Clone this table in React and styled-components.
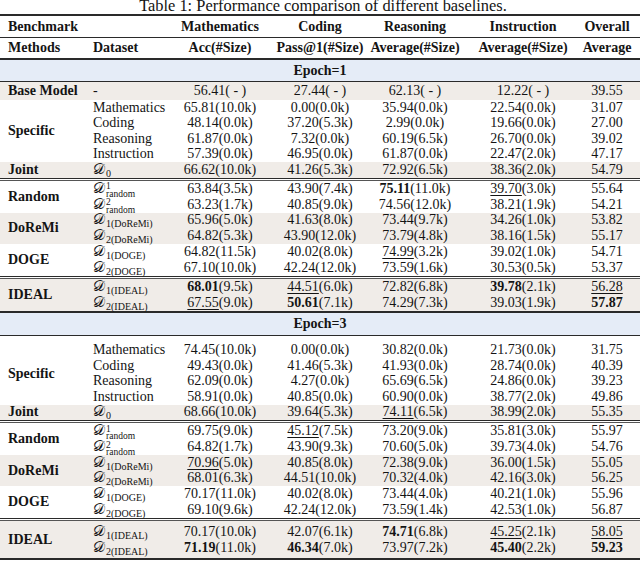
import React from 'react'
import styled, { createGlobalStyle } from 'styled-components'

const GlobalStyle = createGlobalStyle`
  body {
    margin: 0;
    background: #fff;
  }
`

const COLS = '88px 88px 88px 112px 78px 138px 48px'
const GREY = '#f0ece8'
const BLUE = '#e5ecf7'

const Page = styled.div`
  width: 640px;
  height: 563px;
  overflow: hidden;
  font-family: 'Liberation Serif', 'Times New Roman', serif;
  font-size: 14px;
  color: #141414;
`

const Caption = styled.div`
  height: 14px;
  line-height: 11px;
  font-size: 16.4px;
  text-align: center;
  padding-left: 6px;
  white-space: nowrap;
`

const Rule = styled.div`
  height: ${props => props.$w || 1}px;
  background: #2a2a2a;
`

const DoubleRule = styled.div`
  height: 3px;
  box-sizing: border-box;
  border-top: 1px solid #2a2a2a;
  border-bottom: 1px solid #555;
`

const Spacer = styled.div`
  height: ${props => props.$h}px;
`

const Band = styled.div`
  height: ${props => props.$h}px;
  line-height: ${props => props.$h}px;
  background: ${BLUE};
  text-align: center;
  font-weight: bold;
`

const Row = styled.div`
  display: grid;
  grid-template-columns: ${COLS};
  grid-template-rows: repeat(${props => props.$n || 1}, ${props => props.$h}px);
  align-content: center;
  align-items: center;
  height: ${props => props.$n * props.$h + (props.$extra || 0)}px;
  line-height: 16px;
  white-space: nowrap;
  background: ${props => props.$bg || 'transparent'};
`

const Method = styled.div`
  grid-column: 1;
  grid-row: 1 / -1;
  padding-left: 8px;
  font-weight: bold;
`

const HeadLeft = styled.div`
  padding-left: ${props => props.$pad}px;
  font-weight: bold;
  grid-column: ${props => props.$span || 'auto'};
`

const DataSet = styled.div`
  padding-left: 5px;
`

const Num = styled.div`
  display: flex;
  justify-content: center;
  padding-right: ${props => (props.$last ? 18 : 0)}px;
  font-weight: ${props => (props.$head ? 'bold' : 'normal')};
`

const Strong = styled.b`
  font-weight: bold;
`

const Under = styled.span`
  text-decoration: underline;
  text-decoration-thickness: 1px;
  text-underline-offset: 2px;
`

const Cal = styled.span`
  font-family: 'DejaVu Serif', 'DejaVu Sans', serif;
  font-size: 15px;
`

const Sub = styled.span`
  font-size: 10px;
  position: relative;
  top: 3px;
  margin-left: 1px;
`

const Stack = styled.span`
  display: inline-flex;
  flex-direction: column;
  vertical-align: middle;
  font-size: 9.5px;
  line-height: 7.5px;
  margin-left: 1px;
  position: relative;
  top: 1px;
`

const Value = ({ v, last }) => {
  const m = v.match(/^(\*|_)(.+?)\1(.*)$/)
  let body = <span>{v}</span>
  if (m) {
    const Mark = m[1] === '*' ? Strong : Under
    body = (
      <span>
        <Mark>{m[2]}</Mark>
        {m[3]}
      </span>
    )
  }
  return <Num $last={last}>{body}</Num>
}

const Symbol = ({ ds }) => {
  if (typeof ds === 'string') return <DataSet>{ds}</DataSet>
  return (
    <DataSet>
      <Cal>𝒟</Cal>
      {ds.sup ? (
        <Stack>
          <span>{ds.sup}</span>
          <span>{ds.sub}</span>
        </Stack>
      ) : (
        <Sub>{ds.sub}</Sub>
      )}
    </DataSet>
  )
}

const Group = ({ label, h, bg, rows, extra }) => (
  <Row $n={rows.length} $h={h} $bg={bg} $extra={extra}>
    <Method>{label}</Method>
    {rows.map((r, i) => (
      <React.Fragment key={i}>
        <Symbol ds={r[0]} />
        {r.slice(1).map((v, j) => (
          <Value key={j} v={v} last={j === 4} />
        ))}
      </React.Fragment>
    ))}
  </Row>
)

const specific = vals => ({
  label: 'Specific',
  h: 15.5,
  rows: [
    ['Mathematics', ...vals[0]],
    ['Coding', ...vals[1]],
    ['Reasoning', ...vals[2]],
    ['Instruction', ...vals[3]]
  ]
})

const pair = (label, tag, h, bg, a, b, extra) => ({
  label,
  h,
  bg,
  extra,
  rows: [
    [tag === 'random' ? { sup: '1', sub: 'random' } : { sub: `1(${tag})` }, ...a],
    [tag === 'random' ? { sup: '2', sub: 'random' } : { sub: `2(${tag})` }, ...b]
  ]
})

const epochs = [
  {
    title: 'Epoch=1',
    top: 0,
    blocks: [
      [
        { label: 'Base Model', h: 18, bg: GREY, rows: [['-', '56.41( - )', '27.44( - )', '62.13( - )', '12.22( - )', '39.55']] },
        specific([
          ['65.81(10.0k)', '0.00(0.0k)', '35.94(0.0k)', '22.54(0.0k)', '31.07'],
          ['48.14(0.0k)', '37.20(5.3k)', '2.99(0.0k)', '19.66(0.0k)', '27.00'],
          ['61.87(0.0k)', '7.32(0.0k)', '60.19(6.5k)', '26.70(0.0k)', '39.02'],
          ['57.39(0.0k)', '46.95(0.0k)', '61.87(0.0k)', '22.47(2.0k)', '47.17']
        ]),
        { label: 'Joint', h: 15.5, bg: GREY, rows: [[{ sub: '0' }, '66.62(10.0k)', '41.26(5.3k)', '72.92(6.5k)', '38.36(2.0k)', '54.79']] }
      ],
      [
        pair('Random', 'random', 16, null,
          ['63.84(3.5k)', '43.90(7.4k)', '*75.11*(11.0k)', '_39.70_(3.0k)', '55.64'],
          ['63.23(1.7k)', '40.85(9.0k)', '74.56(12.0k)', '38.21(1.9k)', '54.21']),
        pair('DoReMi', 'DoReMi', 15.5, GREY,
          ['65.96(5.0k)', '41.63(8.0k)', '73.44(9.7k)', '34.26(1.0k)', '53.82'],
          ['64.82(5.3k)', '43.90(12.0k)', '73.79(4.8k)', '38.16(1.5k)', '55.17']),
        pair('DOGE', 'DOGE', 16, null,
          ['64.82(11.5k)', '40.02(8.0k)', '_74.99_(3.2k)', '39.02(1.0k)', '54.71'],
          ['67.10(10.0k)', '42.24(12.0k)', '73.59(1.6k)', '30.53(0.5k)', '53.37'])
      ],
      [
        pair('IDEAL', 'IDEAL', 16, GREY,
          ['*68.01*(9.5k)', '_44.51_(6.0k)', '72.82(6.8k)', '*39.78*(2.1k)', '_56.28_'],
          ['_67.55_(9.0k)', '*50.61*(7.1k)', '74.29(7.3k)', '39.03(1.9k)', '*57.87*'])
      ]
    ]
  },
  {
    title: 'Epoch=3',
    top: 7,
    blocks: [
      [
        specific([
          ['74.45(10.0k)', '0.00(0.0k)', '30.82(0.0k)', '21.73(0.0k)', '31.75'],
          ['49.43(0.0k)', '41.46(5.3k)', '41.93(0.0k)', '28.74(0.0k)', '40.39'],
          ['62.09(0.0k)', '4.27(0.0k)', '65.69(6.5k)', '24.86(0.0k)', '39.23'],
          ['58.91(0.0k)', '40.85(0.0k)', '60.90(0.0k)', '38.77(2.0k)', '49.86']
        ]),
        { label: 'Joint', h: 15.5, bg: GREY, rows: [[{ sub: '0' }, '68.66(10.0k)', '39.64(5.3k)', '_74.11_(6.5k)', '38.99(2.0k)', '55.35']] }
      ],
      [
        pair('Random', 'random', 16, null,
          ['69.75(9.0k)', '_45.12_(7.5k)', '73.20(9.0k)', '35.81(3.0k)', '55.97'],
          ['64.82(1.7k)', '43.90(9.3k)', '70.60(5.0k)', '39.73(4.0k)', '54.76']),
        pair('DoReMi', 'DoReMi', 15.5, GREY,
          ['_70.96_(5.0k)', '40.85(8.0k)', '72.38(9.0k)', '36.00(1.5k)', '55.05'],
          ['68.01(6.3k)', '44.51(10.0k)', '70.32(4.0k)', '42.16(3.0k)', '56.25']),
        pair('DOGE', 'DOGE', 16, null,
          ['70.17(11.0k)', '40.02(8.0k)', '73.44(4.0k)', '40.21(1.0k)', '55.96'],
          ['69.10(9.6k)', '42.24(12.0k)', '73.59(1.4k)', '42.53(1.0k)', '56.87'])
      ],
      [
        pair('IDEAL', 'IDEAL', 16, GREY,
          ['70.17(10.0k)', '42.07(6.1k)', '*74.71*(6.8k)', '_45.25_(2.1k)', '_58.05_'],
          ['*71.19*(11.0k)', '*46.34*(7.0k)', '73.97(7.2k)', '*45.40*(2.2k)', '*59.23*'],
          5)
      ]
    ]
  }
]

const App = () => (
  <Page>
    <GlobalStyle />
    <Caption>Table 1: Performance comparison of different baselines.</Caption>
    <Rule $w={2} />
    <Row $n={1} $h={21}>
      <HeadLeft $pad={8} $span="1 / 3">Benchmark</HeadLeft>
      <Num $head>Mathematics</Num>
      <Num $head>Coding</Num>
      <Num $head>Reasoning</Num>
      <Num $head>Instruction</Num>
      <Num $head $last>Overall</Num>
    </Row>
    <Rule />
    <Row $n={1} $h={20}>
      <HeadLeft $pad={8}>Methods</HeadLeft>
      <HeadLeft $pad={5}>Dataset</HeadLeft>
      <Num $head>Acc(#Size)</Num>
      <Num $head>Pass@1(#Size)</Num>
      <Num $head>Average(#Size)</Num>
      <Num $head>Average(#Size)</Num>
      <Num $head $last>Average</Num>
    </Row>
    {epochs.map((ep, k) => (
      <React.Fragment key={ep.title}>
        <Rule $w={2} />
        <Band $h={k === 0 ? 21 : 22}>{ep.title}</Band>
        <Rule />
        {ep.top > 0 && <Spacer $h={ep.top} />}
        {ep.blocks.map((block, b) => (
          <React.Fragment key={b}>
            {b > 0 && <DoubleRule />}
            {block.map((g, i) => (
              <Group key={i} {...g} />
            ))}
          </React.Fragment>
        ))}
      </React.Fragment>
    ))}
    <Rule $w={2} />
  </Page>
)

export default App
